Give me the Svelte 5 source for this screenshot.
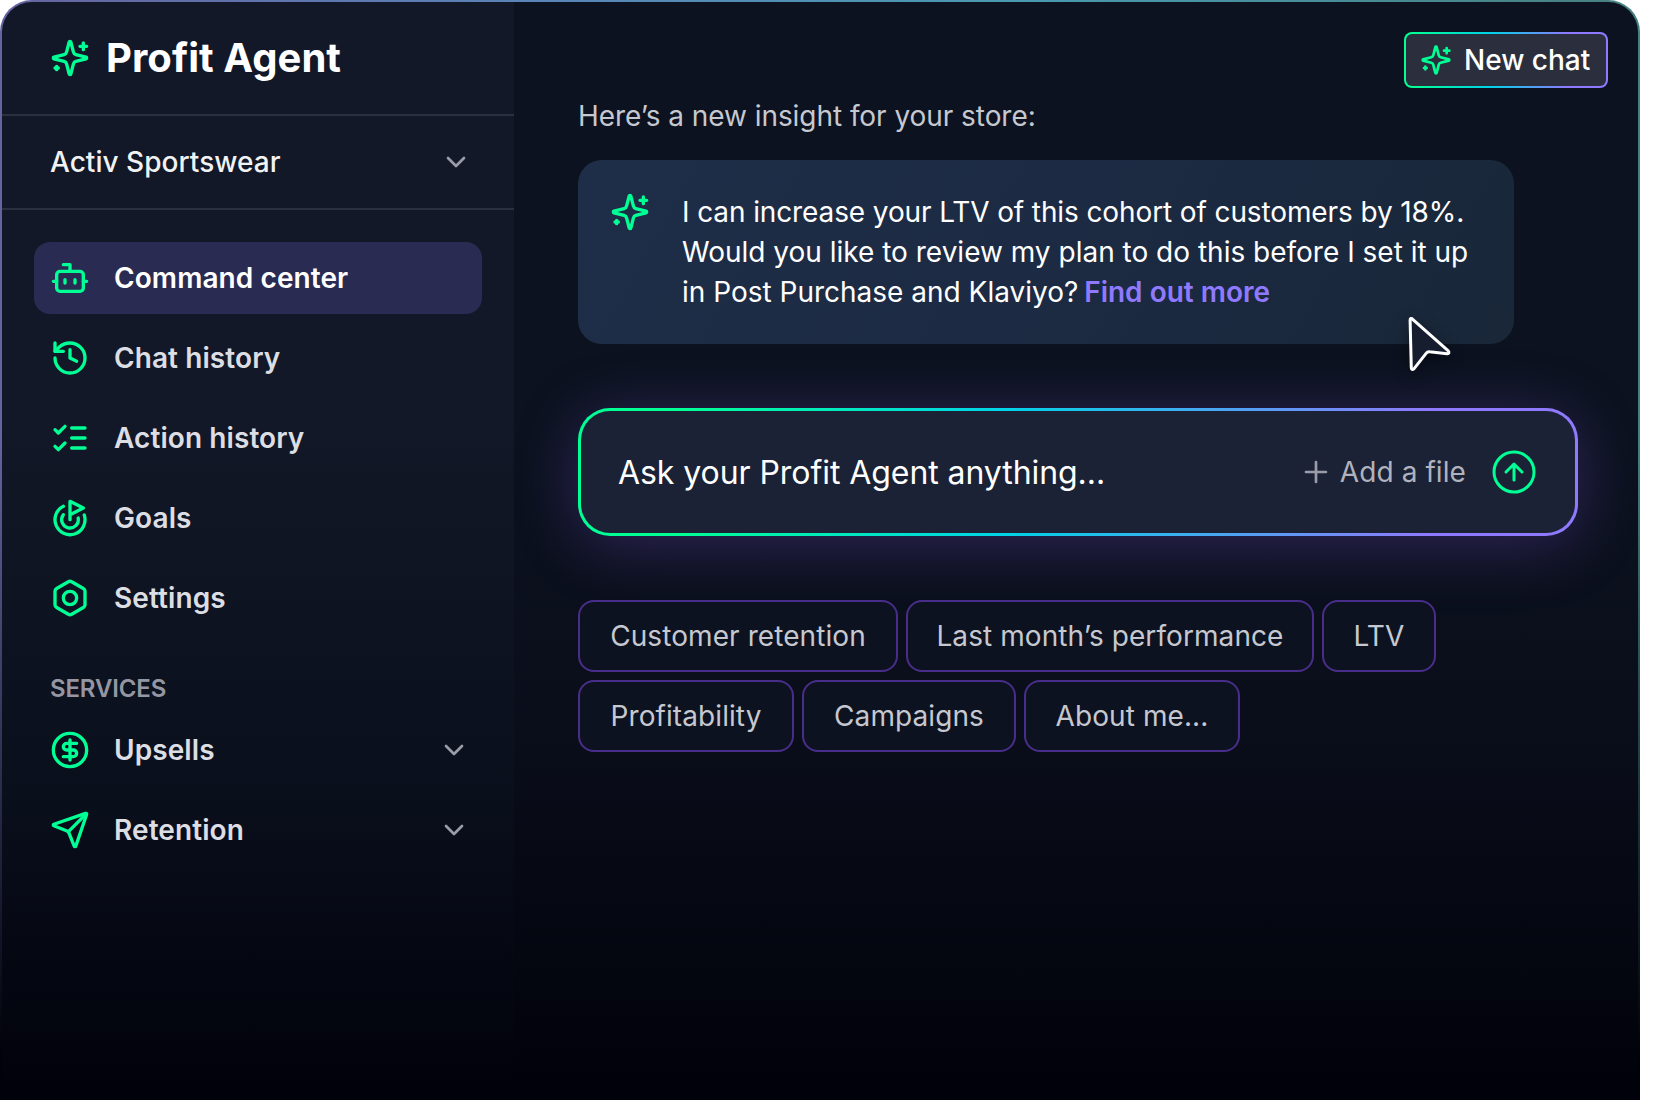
<script>
  const icons = {
    sparkles:
      '<path d="M9.937 15.5A2 2 0 0 0 8.5 14.063l-6.135-1.582a.5.5 0 0 1 0-.962L8.5 9.936A2 2 0 0 0 9.937 8.5l1.582-6.135a.5.5 0 0 1 .963 0L14.063 8.5A2 2 0 0 0 15.5 9.937l6.135 1.581a.5.5 0 0 1 0 .964L15.5 14.063a2 2 0 0 0-1.437 1.437l-1.582 6.135a.5.5 0 0 1-.963 0z"/><path d="M20 3v4M22 5h-4M4 17v2M5 18H3"/>',
    bot: '<path d="M12 8V4H8"/><rect width="16" height="12" x="4" y="8" rx="2"/><path d="M2 14h2M20 14h2M15 13v2M9 13v2"/>',
    history: '<path d="M3 12a9 9 0 1 0 9-9 9.75 9.75 0 0 0-6.74 2.74L3 8"/><path d="M3 3v5h5M12 7v5l4 2"/>',
    list: '<path d="m3 17 2 2 4-4M3 7l2 2 4-4M13 6h8M13 12h8M13 18h8"/>',
    goal: '<path d="M12 13V2l8 4-8 4"/><path d="M20.561 10.222a9 9 0 1 1-12.55-5.29"/><path d="M8.002 9.997a5 5 0 1 0 8.9 2.02"/>',
    bolt: '<path d="M21 16V8a2 2 0 0 0-1-1.73l-7-4a2 2 0 0 0-2 0l-7 4A2 2 0 0 0 3 8v8a2 2 0 0 0 1 1.73l7 4a2 2 0 0 0 2 0l7-4A2 2 0 0 0 21 16z"/><circle cx="12" cy="12" r="4"/>',
    dollar: '<circle cx="12" cy="12" r="10"/><path d="M16 8h-6a2 2 0 1 0 0 4h4a2 2 0 1 1 0 4H8M12 18V6"/>',
    send: '<path d="M14.536 21.686a.5.5 0 0 0 .937-.024l6.5-19a.496.496 0 0 0-.635-.635l-19 6.5a.5.5 0 0 0-.024.937l7.93 3.18a2 2 0 0 1 1.112 1.11z"/><path d="m21.854 2.147-10.94 10.939"/>',
    chevron: '<path d="m6 9 6 6 6-6"/>',
    plus: '<path d="M4.500 12h15M12 4.500v15"/>',
    arrowUp: '<circle cx="12" cy="12" r="10"/><path d="m16 12-4-4-4 4M12 16V8"/>'
  };

  const navItems = [
    { label: 'Command center', icon: 'bot' },
    { label: 'Chat history', icon: 'history' },
    { label: 'Action history', icon: 'list' },
    { label: 'Goals', icon: 'goal' },
    { label: 'Settings', icon: 'bolt' }
  ];

  const services = [
    { label: 'Upsells', icon: 'dollar' },
    { label: 'Retention', icon: 'send' }
  ];

  const suggestionRows = [
    [
      { label: 'Customer retention', width: 320 },
      { label: 'Last month’s performance', width: 408 },
      { label: 'LTV', width: 114 }
    ],
    [
      { label: 'Profitability', width: 216 },
      { label: 'Campaigns', width: 214 },
      { label: 'About me...', width: 216 }
    ]
  ];

  let active = $state('Command center');
</script>

{#snippet icon(name, size, stroke = 2)}
  <svg class="icon" width={size} height={size} viewBox="0 0 24 24" stroke-width={stroke}>
    {@html icons[name]}
  </svg>
{/snippet}

<div class="app">
  <aside class="sidebar">
    <header class="brand">
      {@render icon('sparkles', 40)}
      <h1>Profit Agent</h1>
    </header>

    <button class="store">
      <span>Activ Sportswear</span>
      <span class="chevron">{@render icon('chevron', 32)}</span>
    </button>

    <nav>
      {#each navItems as item}
        <button class="nav-item" class:active={active === item.label} onclick={() => (active = item.label)}>
          {@render icon(item.icon, 40)}
          <span>{item.label}</span>
        </button>
      {/each}

      <h2>SERVICES</h2>

      {#each services as item}
        <button class="nav-item">
          {@render icon(item.icon, 40)}
          <span>{item.label}</span>
          <span class="chevron">{@render icon('chevron', 32)}</span>
        </button>
      {/each}
    </nav>
  </aside>

  <main>
    <button class="new-chat">
      {@render icon('sparkles', 32)}
      <span>New chat</span>
    </button>

    <p class="intro">Here’s a new insight for your store:</p>

    <section class="insight">
      {@render icon('sparkles', 40)}
      <p>
        I can increase your LTV of this cohort of customers by 18%.<br />
        Would you like to review my plan to do this before I set it up<br />
        in Post Purchase and Klaviyo? <a href="#more">Find out more</a>
      </p>
      <svg class="cursor" width="48" height="64" viewBox="0 0 48 64">
        <path
          d="M6.100 8.200C6 6.300 7.500 5.900 8.700 7.300L44.300 38.900C45.500 40.300 44.900 41.900 43.100 41.700L25.500 39.700C24.100 39.500 23.100 40 22.300 41.100L10.100 56.700C9.100 58.100 7.400 57.700 7.300 55.900Z"
        />
      </svg>
    </section>

    <div class="prompt">
      <span class="placeholder">Ask your Profit Agent anything...</span>
      <button class="add-file">
        {@render icon('plus', 32)}
        <span>Add a file</span>
      </button>
      <button class="submit" aria-label="Send">{@render icon('arrowUp', 48, 1.5)}</button>
    </div>

    <div class="suggestions">
      {#each suggestionRows as row}
        <div class="row">
          {#each row as chip}
            <button class="chip" style:width="{chip.width}px">{chip.label}</button>
          {/each}
        </div>
      {/each}
    </div>
  </main>
</div>

<style>
  :global(body) {
    background: #fff;
  }

  .app {
    position: relative;
    display: flex;
    box-sizing: border-box;
    width: 1640px;
    height: 1100px;
    padding: 2px 2px 0;
    overflow: hidden;
    border-radius: 32px 32px 0 0;
    background:
      linear-gradient(180deg, rgba(0, 1, 10, 0) 40%, #00010a 96%),
      linear-gradient(90deg, #6563a0 0%, #5a84b8 32%, #4a9ab0 62%, #478080 100%);
    font-family: Inter, sans-serif;
    font-size: 28px;
    font-weight: 400;
    color: #fff;
  }

  button {
    margin: 0;
    padding: 0;
    border: 0;
    background: none;
    font: inherit;
    letter-spacing: inherit;
    color: inherit;
    text-align: left;
    cursor: pointer;
  }

  h1,
  h2,
  p {
    margin: 0;
  }

  .icon {
    display: block;
    flex: none;
    fill: none;
    stroke: #00ff95;
    stroke-linecap: round;
    stroke-linejoin: round;
  }

  .chevron {
    margin-left: auto;
  }

  .chevron .icon,
  .add-file .icon {
    stroke: #9b9ca9;
  }

  .sidebar {
    display: flex;
    flex: none;
    flex-direction: column;
    width: 512px;
    border-radius: 30px 0 0 0;
    background: linear-gradient(180deg, #121827 0%, #121827 38%, #0a0f1c 72%, #00010a 100%);
  }

  .brand {
    display: flex;
    align-items: center;
    gap: 16px;
    box-sizing: border-box;
    height: 114px;
    padding: 0 48px;
    border-bottom: 2px solid #2b303e;
  }

  h1 {
    font-size: 40px;
    font-weight: 700;
    line-height: 48px;
    letter-spacing: 0.001em;
  }

  .store {
    display: flex;
    align-items: center;
    box-sizing: border-box;
    height: 94px;
    padding: 0 42px 0 48px;
    border-bottom: 2px solid #2b303e;
    font-weight: 500;
    letter-spacing: 0.001em;
    color: #f1f2f4;
  }

  nav {
    display: flex;
    flex-direction: column;
    gap: 8px;
    padding: 32px;
  }

  .nav-item {
    display: flex;
    align-items: center;
    gap: 24px;
    height: 72px;
    padding: 0 12px 0 16px;
    border-radius: 16px;
    font-weight: 600;
    letter-spacing: 0.003em;
    color: #dcdee4;
  }

  .nav-item.active {
    background: #2a2b52;
    color: #fff;
  }

  h2 {
    padding: 30px 16px 0;
    font-size: 24px;
    font-weight: 600;
    line-height: 34px;
    letter-spacing: -0.006em;
    color: #9596a3;
  }

  main {
    display: flex;
    flex: 1;
    flex-direction: column;
    align-items: flex-start;
    padding: 30px 30px 0 64px;
    border-radius: 0 30px 0 0;
    background: linear-gradient(180deg, #0c121f 0%, #0c121f 38%, #0a0e1a 66%, #00010a 100%);
  }

  .new-chat {
    display: flex;
    align-items: center;
    align-self: flex-end;
    gap: 12px;
    box-sizing: border-box;
    width: 204px;
    height: 56px;
    padding: 0 14px;
    border: 2px solid transparent;
    border-radius: 8px;
    background:
      linear-gradient(#2b2f3d, #2b2f3d) padding-box,
      linear-gradient(90deg, #00ff95 5%, #00d4e6 42%, #8f7aff 80%) border-box;
    font-weight: 500;
  }

  .intro {
    margin-top: 8px;
    line-height: 40px;
    letter-spacing: -0.002em;
    color: #c6c8d0;
  }

  .insight {
    position: relative;
    display: flex;
    gap: 32px;
    box-sizing: border-box;
    width: 936px;
    height: 184px;
    margin-top: 24px;
    padding: 32px;
    border-radius: 24px;
    background: linear-gradient(120deg, #1f2e48 0%, #1c2a43 50%, #192739 100%);
    line-height: 40px;
    white-space: nowrap;
  }

  .insight p::first-line {
    letter-spacing: -0.004em;
  }

  .insight a {
    margin-left: -2px;
    font-weight: 600;
    color: #8f7aff;
    text-decoration: none;
  }

  .cursor {
    position: absolute;
    top: 152px;
    left: 826px;
    overflow: visible;
    fill: #161d2e;
    stroke: #fff;
    stroke-width: 3;
    stroke-linejoin: round;
    filter: drop-shadow(0 4px 8px rgba(0, 0, 0, 0.4));
  }

  .prompt {
    display: flex;
    align-items: center;
    box-sizing: border-box;
    width: 1000px;
    height: 128px;
    margin-top: 64px;
    padding: 0 37px;
    border: 3px solid transparent;
    border-radius: 32px;
    background:
      linear-gradient(#1b2236, #1b2236) padding-box,
      linear-gradient(90deg, #00ff95 10%, #00d4e6 42%, #8f7aff 85%) border-box;
    box-shadow: 0 8px 64px rgba(124, 84, 220, 0.32);
  }

  .placeholder {
    font-size: 32px;
    letter-spacing: -0.002em;
  }

  .add-file {
    display: flex;
    align-items: center;
    gap: 8px;
    margin-left: auto;
    letter-spacing: 0.003em;
    color: #b0b2bd;
  }

  .submit {
    margin-left: 24px;
  }

  .suggestions {
    display: flex;
    flex-direction: column;
    gap: 8px;
    margin-top: 64px;
  }

  .row {
    display: flex;
    gap: 8px;
  }

  .chip {
    box-sizing: border-box;
    height: 72px;
    border: 2px solid #482d8a;
    border-radius: 16px;
    background: #0d1220;
    letter-spacing: 0.003em;
    text-align: center;
    color: #c6c8d0;
  }
</style>
